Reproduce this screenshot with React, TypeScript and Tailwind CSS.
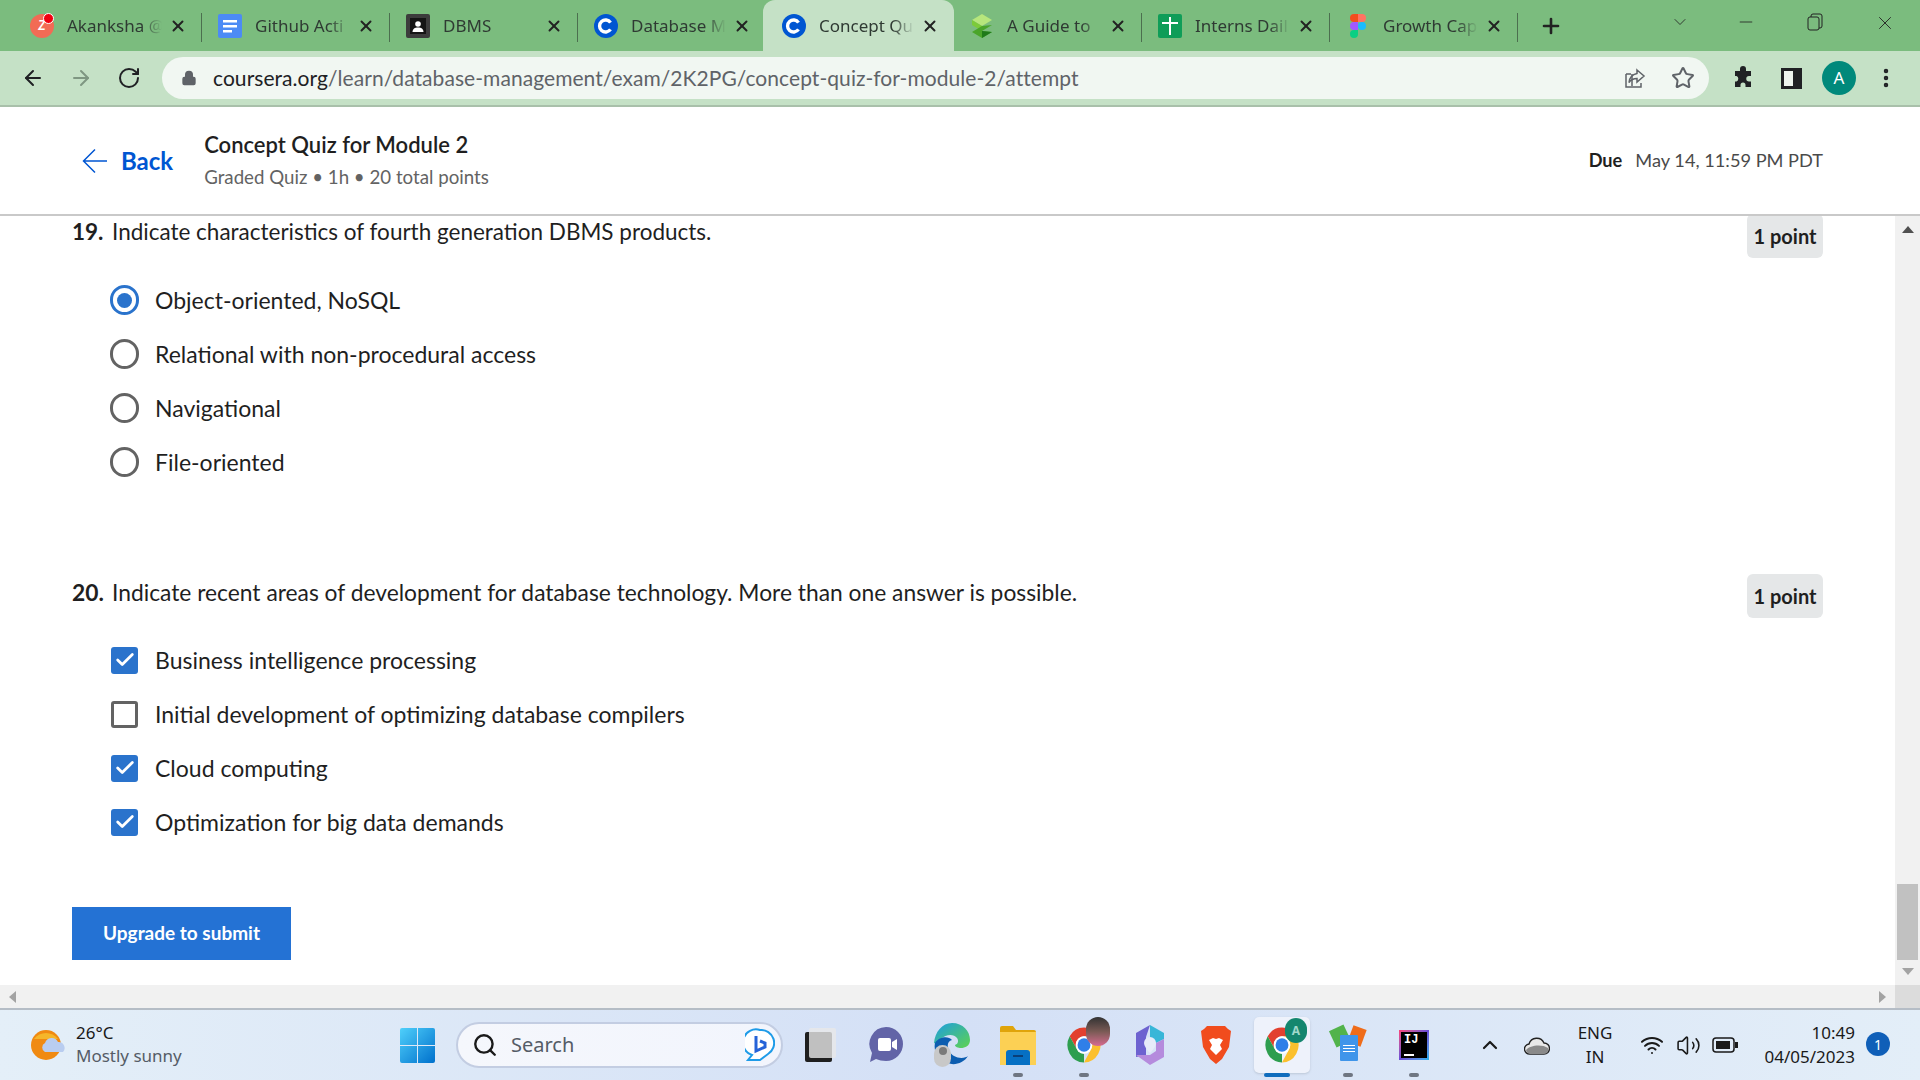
import { ArrowLeft, ArrowRight, RotateCw, Lock, Star, MoreVertical, Plus, X, Minus, ChevronDown, ChevronUp, Check, Search, Wifi, Volume2 } from "lucide-react";
import type { ReactNode } from "react";

function Coursera() {
    return (
        <svg viewBox="0 0 24 24" className="w-6 h-6">
            <circle cx="12" cy="12" r="12" fill="#0056d2" />
            <path d="M16.5 8.600a6 6 0 1 0 0 6.800" fill="none" stroke="#fff" strokeWidth="3.4" />
        </svg>
    )
}

function Zoho() {
    return (
        <div className="relative w-6 h-6 rounded-full bg-[#f26b55] flex items-center justify-center">
            <span className="text-white text-[13px] font-bold italic leading-none">Z</span>
            <span className="absolute -top-[1px] right-0 w-[11px] h-[11px] rounded-full bg-[#f0000f] border border-white"></span>
        </div>
    )
}

function DocsIcon() {
    return (
        <svg viewBox="0 0 24 24" className="w-6 h-6">
            <rect width="24" height="24" rx="2" fill="#4c8bf5" />
            <path d="M5 6h14v2.600H5zM5 11h14v2.600H5zM5 16h9v2.600H5z" fill="#fff" />
        </svg>
    )
}

function DbmsIcon() {
    return (
        <svg viewBox="0 0 24 24" className="w-6 h-6">
            <rect width="24" height="24" rx="2" fill="#3c3c3c" />
            <rect x="4" y="4" width="16" height="16" fill="#151515" />
            <circle cx="12" cy="10" r="2.800" fill="#fff" />
            <path d="M6.500 18c0-3.400 2.400-4.600 5.500-4.600s5.500 1.200 5.500 4.600z" fill="#fff" />
        </svg>
    )
}

function GuideIcon() {
    return (
        <svg viewBox="0 0 24 24" className="w-6 h-6">
            <path d="M12 0l10 6-10 6L2 6z" fill="#b6e67c" />
            <path d="M2 6l10 6v5L2 11z" fill="#7ccb3a" />
            <path d="M22 11l-10 6 10 1-10 6-10-6 10-6z" fill="#4aa52a" />
            <path d="M12 17l10 1-10 6z" fill="#1f7a1a" />
        </svg>
    )
}

function SheetsIcon() {
    return (
        <svg viewBox="0 0 24 24" className="w-6 h-6">
            <rect width="24" height="24" rx="2" fill="#0f9d58" />
            <path d="M4 8h7V3h2v5h7v2h-7v11h-2V10H4z" fill="#fff" />
        </svg>
    )
}

function FigmaIcon() {
    return (
        <svg viewBox="0 0 16 24" className="w-[16px] h-6">
            <path d="M8 0H4a4 4 0 0 0 0 8h4z" fill="#f24e1e" />
            <path d="M8 0h4a4 4 0 0 1 0 8H8z" fill="#ff7262" />
            <path d="M8 8H4a4 4 0 0 0 0 8h4z" fill="#a259ff" />
            <circle cx="12" cy="12" r="4" fill="#1abcfe" />
            <path d="M8 16H4a4 4 0 1 0 4 4z" fill="#0acf83" />
        </svg>
    )
}

function ChromeIcon({ size = "w-[36px] h-[38px]" }: { size?: string }) {
    return (
        <svg viewBox="0 0 24 24" className={size} preserveAspectRatio="none">
            <path d="M2.470 6.500A11 11 0 0 1 21.530 6.500H12A5.500 5.500 0 0 0 7.240 14.750z" fill="#e2402f" />
            <path d="M21.530 6.500A11 11 0 0 1 12 23l4.760-8.250A5.500 5.500 0 0 0 12 6.500z" fill="#fbc02d" />
            <path d="M12 23A11 11 0 0 1 2.470 6.500L7.240 14.750A5.500 5.500 0 0 0 12 17.500z" fill="#2e9e4f" />
            <circle cx="12" cy="12" r="5.500" fill="#fff" />
            <circle cx="12" cy="12" r="4.300" fill="#2f7fe8" />
        </svg>
    )
}

const tabs: { title: string; icon: ReactNode; active?: boolean; sep?: boolean }[] = [
    { title: "Akanksha @", icon: <Zoho />, sep: true },
    { title: "Github Acti", icon: <DocsIcon />, sep: true },
    { title: "DBMS", icon: <DbmsIcon />, sep: true },
    { title: "Database M", icon: <Coursera /> },
    { title: "Concept Qu", icon: <Coursera />, active: true },
    { title: "A Guide to", icon: <GuideIcon />, sep: true },
    { title: "Interns Dail", icon: <SheetsIcon />, sep: true },
    { title: "Growth Cap", icon: <FigmaIcon />, sep: true },
]

function TabBar() {
    return (
        <div className="h-[51px] shrink-0 bg-[#7bbc7e] flex items-stretch pl-[14px]">
            {tabs.map((t) => (
                <div key={t.title} className="relative w-[188px] shrink-0 flex items-center pl-[16px]">
                    {t.active && (
                        <div className="absolute -left-[3px] right-0 top-0 bottom-0 bg-[#c5e1c6] rounded-t-[12px]"></div>
                    )}
                    <div className="relative w-6 flex justify-center shrink-0">{t.icon}</div>
                    <div className="relative ml-[13px] w-[95px] whitespace-nowrap text-[17px] text-[#2f3a33] font-['Noto_Sans',sans-serif] [mask-image:linear-gradient(to_right,black_78%,transparent)]">
                        {t.title}
                    </div>
                    <X className="relative ml-[7px] shrink-0 text-[#222]" size={18} strokeWidth={2.6} />
                    {t.sep && <div className="absolute right-0 top-[13px] w-px h-[29px] bg-[#4c6f4f]"></div>}
                </div>
            ))}
            <div className="w-[66px] flex items-center justify-center">
                <Plus size={24} strokeWidth={2.6} className="text-[#222]" />
            </div>
            <div className="flex-1 flex items-start justify-end text-[#222] pt-[12px] pr-[24px]">
                <ChevronDown size={20} strokeWidth={1} className="mr-[46px]" />
                <Minus size={20} strokeWidth={1} className="mr-[49px]" />
                <svg viewBox="0 0 20 20" className="w-5 h-5 mr-[49px]" fill="none" stroke="#222" strokeWidth="1">
                    <rect x="3" y="5" width="11" height="13" rx="2" />
                    <path d="M6 5V4a2 2 0 0 1 2-2h7a2 2 0 0 1 2 2v10a2 2 0 0 1-2 2h-1" />
                </svg>
                <X size={22} strokeWidth={1} />
            </div>
        </div>
    )
}

function Toolbar() {
    return (
        <div className="h-[54px] shrink-0 bg-[#c5e1c6] flex items-center pl-[21px] pr-[21px] text-[#202124]">
            <ArrowLeft size={24} strokeWidth={2} />
            <ArrowRight size={24} strokeWidth={2} className="ml-[24px] text-[#7f9782]" />
            <RotateCw size={24} strokeWidth={2} className="ml-[24px]" />
            <div className="ml-[21px] h-[42px] w-[1547px] shrink-0 rounded-full bg-[#f1f7f2] flex items-center pl-[19px] pr-[14px]">
                <Lock size={16} fill="#5f6368" className="text-[#5f6368] shrink-0" />
                <div className="ml-[16px] flex-1 text-[21px] tracking-[0.06px] text-[#5f6368] font-['Lato',sans-serif] whitespace-nowrap">
                    <span className="text-[#202124]">coursera.org</span>/learn/database-management/exam/2K2PG/concept-quiz-for-module-2/attempt
                </div>
                <svg viewBox="0 0 24 24" className="w-6 h-6 mr-[24px]" fill="none" stroke="#5f6368" strokeWidth="1.500">
                    <path d="M9 20V8M3 8h5M3 8v13h15v-4" />
                    <path d="M14 4l7 6-7 6v-3.500c-3.500 0-6 1-8 4 .5-5 3.500-8 8-9z" />
                </svg>
                <Star size={24} strokeWidth={2} className="text-[#5f6368]" />
            </div>
            <svg viewBox="0 0 24 24" className="w-6 h-6 ml-[22px] shrink-0" fill="#202124">
                <path d="M9 3a3 3 0 0 1 6 0v2h5v5h-2a2.600 2.600 0 0 0 0 5.500h2V21h-5.500v-2a2.500 2.500 0 0 0-5 0v2H4v-5.500h1.500a3 3 0 0 0 0-5.500H4V5h5z" />
            </svg>
            <svg viewBox="0 0 21 21" className="w-[21px] h-[21px] ml-[26px] shrink-0">
                <path d="M0 0h21v21H0z" fill="#202124" />
                <path d="M3 3h9v15H3z" fill="#eef4ee" />
            </svg>
            <div className="ml-[20px] w-[34px] h-[34px] shrink-0 rounded-full bg-[#00897b] text-white text-[17px] flex items-center justify-center font-['Noto_Sans',sans-serif]">A</div>
            <MoreVertical size={24} strokeWidth={2.500} className="ml-[18px] shrink-0" />
        </div>
    )
}

function QuizHeader() {
    return (
        <div className="h-[111px] shrink-0 bg-white border-t-2 border-b-2 border-t-[#a9c0aa] border-b-[#c9c9c9] flex items-center pl-[82px] pr-[97px]">
            <svg viewBox="0 0 26 26" className="w-[26px] h-[26px]" fill="none" stroke="#0056d2" strokeWidth="1.500">
                <path d="M25 13H2M13 1.500L1.500 13 13 24.500" />
            </svg>
            <span className="ml-[13px] text-[#0056d2] text-[24px] font-bold">Back</span>
            <div className="ml-[31px] flex flex-col">
                <span className="text-[22px] leading-[32px] font-semibold text-[#1f1f1f] mt-[1px]">Concept Quiz for Module 2</span>
                <span className="text-[18.7px] leading-[32px] text-[#636363]">Graded Quiz • 1h • 20 total points</span>
            </div>
            <div className="ml-auto text-[18.2px] text-[#4a4a4a]">
                <span className="font-bold text-[#1f1f1f] mr-[13px]">Due</span>May 14, 11:59 PM PDT
            </div>
        </div>
    )
}

function Question({ num, text, children, className, size }: { num: string; text: string; children: ReactNode; className?: string; size: string }) {
    return (
        <div className={className}>
            <div className="flex justify-between items-start h-[32px]">
                <div className={`${size} leading-[32px] text-[#1f1f1f] flex`}>
                    <span className="font-bold w-[40px]">{num}</span>
                    <span>{text}</span>
                </div>
                <div className="-mt-[2px] w-[76px] h-[44px] shrink-0 rounded-[6px] bg-[#e5e7e8] flex items-center justify-center text-[20px] font-bold text-[#1f1f1f]">1 point</div>
            </div>
            <div className="mt-[25px]">{children}</div>
        </div>
    )
}

function Option({ control, label }: { control: ReactNode; label: string }) {
    return (
        <div className="h-[54px] flex items-center pl-[38px] text-[23px] text-[#1f1f1f]">
            <div className="w-[29px] flex justify-center shrink-0">{control}</div>
            <span className="ml-[16px]">{label}</span>
        </div>
    )
}

function Radio({ on }: { on?: boolean }) {
    return on ? (
        <div className="w-[30px] h-[30px] rounded-full border-[3px] border-[#2a73cc] flex items-center justify-center">
            <div className="w-[15px] h-[15px] rounded-full bg-[#2a73cc]"></div>
        </div>
    ) : (
        <div className="w-[30px] h-[30px] rounded-full border-[3px] border-[#636363]"></div>
    )
}

function Box({ on }: { on?: boolean }) {
    return on ? (
        <div className="w-[27px] h-[27px] rounded-[3px] bg-[#2a73cc] flex items-center justify-center">
            <Check size={22} strokeWidth={3} className="text-white" />
        </div>
    ) : (
        <div className="w-[27px] h-[27px] rounded-[3px] border-[3px] border-[#636363]"></div>
    )
}

function QuizBody() {
    return (
        <div className="flex-1 flex min-h-0">
            <div className="flex-1 overflow-hidden bg-white pl-[72px] pr-[72px]">
                <Question size="text-[22.5px]" num="19." text="Indicate characteristics of fourth generation DBMS products." className="mb-[87px]">
                    <Option control={<Radio on />} label="Object-oriented, NoSQL" />
                    <Option control={<Radio />} label="Relational with non-procedural access" />
                    <Option control={<Radio />} label="Navigational" />
                    <Option control={<Radio />} label="File-oriented" />
                </Question>
                <Question size="text-[22.8px]" num="20." text="Indicate recent areas of development for database technology. More than one answer is possible.">
                    <Option control={<Box on />} label="Business intelligence processing" />
                    <Option control={<Box />} label="Initial development of optimizing database compilers" />
                    <Option control={<Box on />} label="Cloud computing" />
                    <Option control={<Box on />} label="Optimization for big data demands" />
                </Question>
                <button className="mt-[58px] w-[219px] h-[53px] bg-[#2472d4] text-white text-[19px] font-bold">Upgrade to submit</button>
            </div>
            <div className="w-[25px] shrink-0 bg-[#f1f1f1] flex flex-col items-center justify-between py-[8px]">
                <svg viewBox="0 0 12 7" className="w-3 h-[7px] mt-[2px]"><path d="M6 0l6 7H0z" fill="#505050" /></svg>
                <div className="flex flex-col items-center">
                    <div className="w-[21px] h-[76px] bg-[#c1c1c1] mb-[8px]"></div>
                    <svg viewBox="0 0 12 7" className="w-3 h-[7px] mb-[2px]"><path d="M0 0h12L6 7z" fill="#a3a3a3" /></svg>
                </div>
            </div>
        </div>
    )
}

function HScroll() {
    return (
        <div className="h-[25px] shrink-0 bg-[#f1f1f1] flex items-center border-b-2 border-b-[#b5bdc6]">
            <svg viewBox="0 0 7 12" className="w-[7px] h-3 ml-[9px]"><path d="M7 0v12L0 6z" fill="#a3a3a3" /></svg>
            <svg viewBox="0 0 7 12" className="w-[7px] h-3 ml-auto mr-[9px]"><path d="M0 0v12l7-6z" fill="#a3a3a3" /></svg>
            <div className="w-[25px] h-full bg-[#dcdcdc]"></div>
        </div>
    )
}

function Dot({ blue }: { blue?: boolean }) {
    return <div className={blue ? "absolute bottom-0 left-[15px] w-[26px] h-[4px] rounded-full bg-[#0f6cbd]" : "absolute bottom-0 left-[28px] w-[10px] h-[4px] rounded-full bg-[#6f7682]"}></div>
}

function TaskSlot({ children, dot }: { children: ReactNode; dot?: boolean }) {
    return (
        <div className="relative w-[66px] h-[64px] shrink-0 flex items-center justify-center">
            {children}
            {dot && <Dot />}
        </div>
    )
}

function Taskbar() {
    return (
        <div className="h-[70px] shrink-0 bg-gradient-to-r from-[#e4eff8] via-[#d4e0f6] to-[#e3eef8] flex items-center font-['Noto_Sans',sans-serif] text-[#1a1a1a]">
            <svg viewBox="0 0 34 30" className="ml-[31px] w-[34px] h-[30px] shrink-0">
                <ellipse cx="15" cy="15" rx="15" ry="15" fill="#f08a12" />
                <path d="M3 9a15 15 0 0 1 24 0z" fill="#f5b62a" />
                <path d="M14 22a5 5 0 0 1 0-9 7 7 0 0 1 13-1 6 6 0 0 1 5 10z" fill="#b9cdf0" />
            </svg>
            <div className="ml-[11px] -mt-[3px] w-[150px] flex flex-col shrink-0">
                <span className="text-[17px] leading-[23px]">26°C</span>
                <span className="text-[17px] leading-[23px] text-[#555c66]">Mostly sunny</span>
            </div>
            <svg viewBox="0 0 35 35" className="ml-[174px] w-[35px] h-[35px] shrink-0">
                <defs>
                    <linearGradient id="win" x1="0" y1="0" x2="1" y2="1">
                        <stop offset="0" stopColor="#4fd0fb" />
                        <stop offset="1" stopColor="#0070cc" />
                    </linearGradient>
                </defs>
                <path d="M0 2a2 2 0 0 1 2-2h15v17H0zM18 0h15a2 2 0 0 1 2 2v15H18zM0 18h17v17H2a2 2 0 0 1-2-2zM18 18h17v15a2 2 0 0 1-2 2H18z" fill="url(#win)" />
            </svg>
            <div className="ml-[21px] w-[327px] h-[46px] shrink-0 rounded-full bg-gradient-to-r from-[#f5f7fc] to-[#f2f5fd] border-2 border-[#c3cde2] flex items-center pl-[14px] pr-[6px]">
                <Search size={26} strokeWidth={2.200} className="text-[#1a1a1a]" />
                <span className="ml-[13px] text-[20px] text-[#555c66]">Search</span>
                <svg viewBox="0 0 30 34" className="ml-auto w-[30px] h-[34px]">
                    <path d="M15 2a13 13 0 0 1 8 24l-8 6H3l4-5A13 13 0 0 1 15 2z" fill="#fff" stroke="#1e9be8" strokeWidth="2" />
                    <path d="M11 8v15l9-4v-4l-5-2" fill="none" stroke="#2563d8" strokeWidth="3" />
                </svg>
            </div>
            <div className="ml-[4px] flex items-center">
                <TaskSlot>
                    <div className="relative w-[28px] h-[34px] -ml-[3px]">
                        <div className="absolute left-0 bottom-0 w-[27px] h-[30px] rounded-[2px] bg-[#1f1f1f]"></div>
                        <div className="absolute right-[-3px] top-0 w-[27px] h-[30px] rounded-[2px] bg-[#e8e8e8]/80"></div>
                    </div>
                </TaskSlot>
                <TaskSlot>
                    <svg viewBox="0 0 34 36" className="w-[34px] h-[36px]">
                        <path d="M17 0a17 17 0 0 1 0 34c-4 0-7-1-10-2l-6 3 2-9A17 17 0 0 1 17 0z" fill="#6264a7" />
                        <rect x="9" y="11" width="13" height="13" rx="2" fill="#fff" />
                        <path d="M23 15l5-3v11l-5-3z" fill="#fff" />
                    </svg>
                </TaskSlot>
                <TaskSlot>
                    <div className="relative w-[36px] h-[44px]">
                        <svg viewBox="0 0 36 44" className="w-[36px] h-[44px]">
                            <defs>
                                <linearGradient id="edge" x1="0" y1="0" x2="1" y2="1">
                                    <stop offset="0" stopColor="#1b9de2" />
                                    <stop offset="1" stopColor="#5fd34f" />
                                </linearGradient>
                            </defs>
                            <path d="M18 0c11 0 18 8 18 17 0 6-5 8-9 8-3 0-6-1-6-3 3-1 4-4 2-7-3-4-11-4-16 1-3 3-6 5-7 4C1 9 8 0 18 0z" fill="url(#edge)" />
                            <path d="M1 20c3-6 13-8 17-3-6 1-6 11 2 16 5 3 12 2 14 0-4 7-14 10-20 7C5 37-1 29 1 20z" fill="#0c5db0" />
                        </svg>
                        <div className="absolute left-0 bottom-0 w-[17px] h-[22px] rounded-full bg-[#c8c8c8] flex items-start justify-center pt-[2px]">
                            <div className="w-[8px] h-[8px] rounded-full bg-[#7a7a7a]"></div>
                        </div>
                    </div>
                </TaskSlot>
                <TaskSlot dot>
                    <svg viewBox="0 0 36 40" className="w-[36px] h-[40px]">
                        <path d="M0 3a2 2 0 0 1 2-2h11l3 4h18a2 2 0 0 1 2 2v4H0z" fill="#e0a40a" />
                        <path d="M0 7h36v33H0z" fill="#fcd054" />
                        <path d="M6 28a3 3 0 0 1 3-3h18a3 3 0 0 1 3 3v12H6z" fill="#0670c4" />
                        <rect x="13" y="30" width="10" height="2" fill="#0a3f78" />
                    </svg>
                </TaskSlot>
                <TaskSlot dot>
                    <div className="relative">
                        <ChromeIcon />
                        <div className="absolute -top-[9px] -right-[8px] w-[24px] h-[29px] rounded-full bg-gradient-to-b from-[#333] via-[#7a5a55] to-[#d66a90]"></div>
                    </div>
                </TaskSlot>
                <TaskSlot>
                    <svg viewBox="0 0 32 40" className="w-[32px] h-[40px]">
                        <path d="M16 0l14 8v6l-8 4-6-4z" fill="#38b6d8" />
                        <path d="M16 0L2 8v24l10-2V12z" fill="#6d62d0" />
                        <path d="M2 30l14 10 14-8V14l-8 4v8l-6 4z" fill="#b58bdd" />
                        <path d="M16 12a6 6 0 0 1 6 6c0 4-6 10-6 10s-6-6-6-10a6 6 0 0 1 6-6z" fill="#e6ebf9" />
                    </svg>
                </TaskSlot>
                <TaskSlot>
                    <svg viewBox="0 0 30 38" className="w-[30px] h-[38px]">
                        <path d="M6 0h18l3 3 3 2-2 16-7 12-6 5-6-5-7-12L0 5l3-2z" fill="#f14c1d" />
                        <path d="M8 14l4-2 3 1 3-1 4 2-3 5 2 4-6 6-6-6 2-4z" fill="#fff" />
                    </svg>
                </TaskSlot>
                <div className="relative w-[66px] h-[64px] shrink-0 flex items-center justify-center">
                    <div className="w-[56px] h-[56px] rounded-[5px] bg-[#eef2fb] shadow-sm flex items-center justify-center">
                        <div className="relative">
                            <ChromeIcon />
                            <div className="absolute -top-[8px] -right-[7px] w-[22px] h-[25px] rounded-full bg-[#14866e] text-[#9fd8cb] text-[12px] font-bold flex items-center justify-center">A</div>
                        </div>
                    </div>
                    <Dot blue />
                </div>
                <TaskSlot dot>
                    <div className="relative w-[32px] h-[36px]">
                        <div className="absolute left-0 top-0 w-[16px] h-[18px] rotate-[-25deg] bg-[#52b34b]"></div>
                        <div className="absolute right-0 top-0 w-[14px] h-[18px] rotate-[20deg] bg-[#ef6c1a]"></div>
                        <div className="absolute left-[8px] top-[8px] w-[18px] h-[26px] rounded-[1px] bg-[#3f95ea] flex flex-col gap-[2px] pt-[10px] px-[3px]">
                            <div className="h-px bg-white"></div>
                            <div className="h-px bg-white"></div>
                            <div className="h-px bg-white"></div>
                        </div>
                    </div>
                </TaskSlot>
                <TaskSlot dot>
                    <div className="w-[30px] h-[30px] p-[2px] bg-gradient-to-br from-[#fc3e78] via-[#6a4dd8] to-[#19b4f0]">
                        <div className="w-full h-full bg-black flex flex-col justify-between px-[3px] py-[2px] text-white font-['Liberation_Mono',monospace] font-bold text-[12px] leading-[12px]">
                            <span>IJ</span>
                            <div className="w-[10px] h-[2px] bg-white"></div>
                        </div>
                    </div>
                </TaskSlot>
            </div>
            <ChevronUp size={24} strokeWidth={2.200} className="ml-[31px] shrink-0" />
            <svg viewBox="0 0 26 20" className="ml-[22px] w-[26px] h-[20px] shrink-0">
                <path d="M6 19a5 5 0 0 1-1-10 8 8 0 0 1 15-1 5.500 5.500 0 0 1 0 11z" fill="#e8e8e8" stroke="#222" strokeWidth="1.400" />
                <path d="M2 15c4-5 16-6 22-2 1 3-1 6-4 6H6a5 5 0 0 1-4-4z" fill="#8a8a8a" />
            </svg>
            <div className="ml-[25px] w-[40px] shrink-0 flex flex-col items-center text-[17px] leading-[24px]">
                <span>ENG</span>
                <span>IN</span>
            </div>
            <Wifi size={24} strokeWidth={2} className="ml-[25px] shrink-0" />
            <Volume2 size={25} strokeWidth={1.500} className="ml-[12px] shrink-0" />
            <svg viewBox="0 0 26 16" className="ml-[11px] w-[26px] h-[16px] shrink-0">
                <rect x="1" y="1" width="21" height="14" rx="3" fill="none" stroke="#1a1a1a" strokeWidth="1.500" />
                <rect x="4" y="4" width="14" height="8" fill="#1a1a1a" />
                <rect x="23" y="5" width="3" height="6" fill="#1a1a1a" />
            </svg>
            <div className="ml-auto flex flex-col items-end text-[17px] leading-[24px]">
                <span>10:49</span>
                <span>04/05/2023</span>
            </div>
            <div className="ml-[11px] mr-[30px] w-[24px] h-[24px] shrink-0 rounded-full bg-[#0f5fb8] text-white text-[14px] flex items-center justify-center -mt-[2px]">1</div>
        </div>
    )
}

export default function App() {
    return (
        <div className="w-[1920px] h-[1080px] flex flex-col overflow-hidden font-['Lato',sans-serif]">
            <TabBar />
            <Toolbar />
            <QuizHeader />
            <QuizBody />
            <HScroll />
            <Taskbar />
        </div>
    )
}
